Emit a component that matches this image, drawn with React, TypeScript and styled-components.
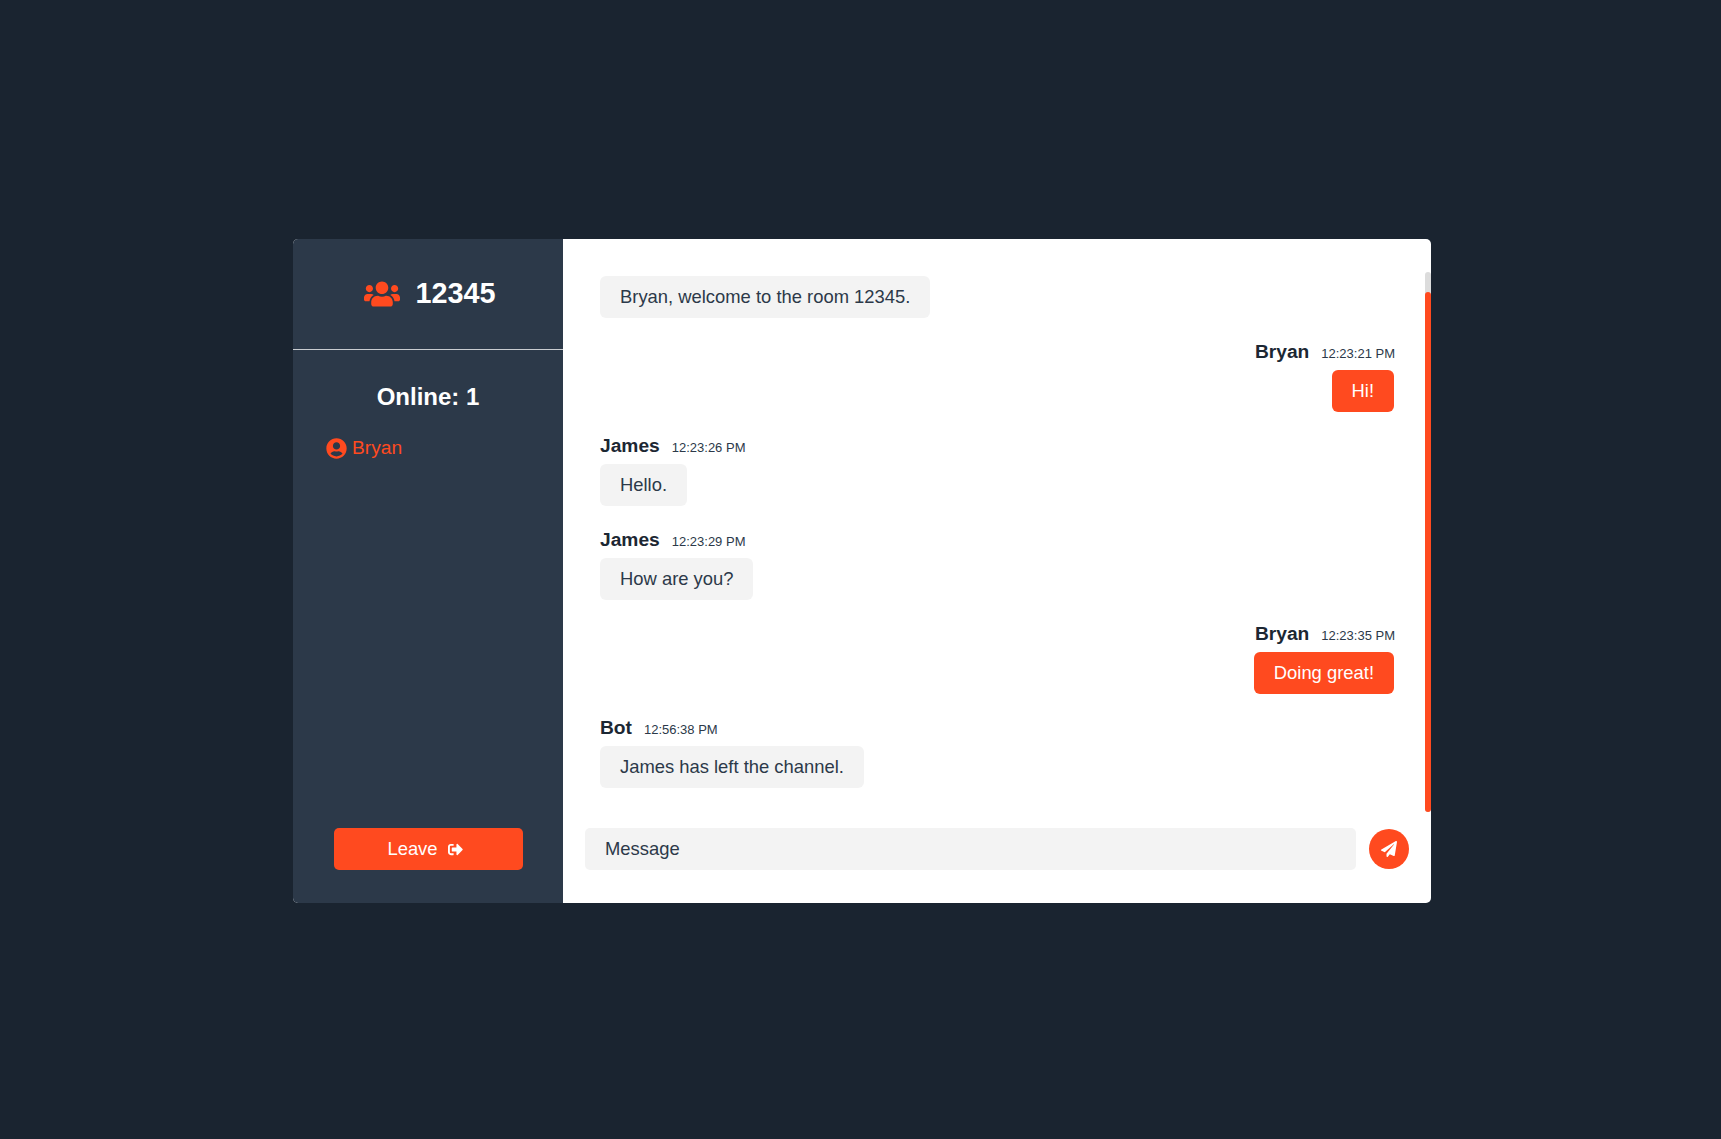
import { useLayoutEffect, useRef } from "react";
import styled, { createGlobalStyle } from "styled-components";
import { FaPaperPlane, FaSignOutAlt, FaUserCircle, FaUsers } from "react-icons/fa";

const orange = "#ff4a1f";

const GlobalStyle = createGlobalStyle`
  * {
    box-sizing: border-box;
  }
  html, body {
    margin: 0;
    background: #1a2430;
    font-family: "Liberation Sans", Arial, sans-serif;
  }
`;

const Page = styled.div`
  min-height: 100vh;
  padding: 239px 0 0 293px;
`;
const Card = styled.div`
  display: grid;
  grid-template-columns: 270px 1fr;
  width: 1138px;
  height: 664px;
  border-radius: 5px;
  overflow: hidden;
  background: #fff;
`;
const Sidebar = styled.aside`
  display: flex;
  flex-direction: column;
  background: #2c3949;
  color: #fff;
`;
const RoomHeader = styled.h2`
  display: flex;
  align-items: center;
  justify-content: center;
  gap: 15px;
  height: 111px;
  margin: 0;
  padding: 0 0 1px 4px;
  font-size: 28.8px;
  border-bottom: 1px solid #c9ccd0;
  svg {
    color: ${orange};
    font-size: 36px;
  }
`;
const OnlineTitle = styled.h3`
  margin: 33px 0 0;
  font-size: 24px;
  line-height: 28px;
  text-align: center;
`;
const UserList = styled.ul`
  flex: 1;
  list-style: none;
  margin: 25px 0 0;
  padding: 0 0 0 33px;
`;
const User = styled.li`
  display: flex;
  align-items: center;
  gap: 5px;
  color: ${orange};
  font-size: 19.2px;
  line-height: 24px;
  svg {
    font-size: 21px;
  }
`;
const LeaveButton = styled.button`
  display: flex;
  align-items: center;
  justify-content: center;
  gap: 10px;
  width: 189px;
  height: 42px;
  margin: 0 auto 33px;
  padding: 0 6px 0 0;
  border: 0;
  border-radius: 5px;
  background: ${orange};
  color: #fff;
  font: inherit;
  font-size: 18.4px;
  svg {
    font-size: 15px;
  }
`;
const ChatPane = styled.main`
  position: relative;
  display: flex;
  flex-direction: column;
  min-width: 0;
  padding-top: 33px;
`;
const Messages = styled.div`
  display: flex;
  flex-direction: column;
  gap: 22px;
  height: 540px;
  padding: 25px 37px 24px;
  overflow: hidden;
`;
const ScrollTrack = styled.div`
  position: absolute;
  top: 33px;
  right: 0;
  width: 6px;
  height: 540px;
  border-radius: 3px;
  background: #dcdcdc;
`;
const ScrollThumb = styled.div`
  position: absolute;
  bottom: 0;
  width: 100%;
  border-radius: 3px;
  background: ${orange};
`;
const MessageRow = styled.div<{ $mine?: boolean }>`
  display: flex;
  flex: none;
  flex-direction: column;
  align-items: ${(p) => (p.$mine ? "flex-end" : "flex-start")};
`;
const Meta = styled.div<{ $mine?: boolean }>`
  display: flex;
  align-items: baseline;
  gap: 12px;
  height: 30px;
  margin-right: ${(p) => (p.$mine ? "-1px" : "0")};
  line-height: 24px;
`;
const Name = styled.span`
  color: #1c2733;
  font-size: 19.2px;
  font-weight: 700;
`;
const Time = styled.span`
  color: #2c3949;
  font-size: 13px;
`;
const Bubble = styled.div<{ $mine?: boolean }>`
  height: 42px;
  padding: 0 20px;
  border-radius: 6px;
  background: ${(p) => (p.$mine ? orange : "#f3f3f3")};
  color: ${(p) => (p.$mine ? "#fff" : "#2c3949")};
  font-size: 18.4px;
  line-height: 41px;
`;
const Composer = styled.form`
  display: flex;
  align-items: center;
  gap: 13px;
  padding: 16px 22px 0;
`;
const MessageInput = styled.input`
  flex: 1;
  height: 42px;
  padding: 0 20px;
  border: 0;
  border-radius: 5px;
  outline: none;
  background: #f3f3f3;
  color: #2c3949;
  font: inherit;
  font-size: 18.4px;
  &::placeholder {
    color: #2c3949;
    opacity: 1;
  }
`;
const SendButton = styled.button`
  display: flex;
  align-items: center;
  justify-content: center;
  flex: none;
  width: 40px;
  height: 40px;
  padding: 0;
  border: 0;
  border-radius: 50%;
  background: ${orange};
  color: #fff;
  font-size: 16px;
`;

type Message = { name?: string; time?: string; text: string; mine?: boolean };

const messages: Message[] = [
  { text: "Bryan, welcome to the room 12345." },
  { name: "Bryan", time: "12:23:21 PM", text: "Hi!", mine: true },
  { name: "James", time: "12:23:26 PM", text: "Hello." },
  { name: "James", time: "12:23:29 PM", text: "How are you?" },
  { name: "Bryan", time: "12:23:35 PM", text: "Doing great!", mine: true },
  { name: "Bot", time: "12:56:38 PM", text: "James has left the channel." },
];

const App = () => {
  const listRef = useRef<HTMLDivElement>(null);
  const thumbRef = useRef<HTMLDivElement>(null);

  // the browser hides native scrollbars here, so the thumb is sized by hand
  useLayoutEffect(() => {
    const list = listRef.current;
    if (!list || !thumbRef.current) return;
    list.scrollTop = list.scrollHeight;
    thumbRef.current.style.height = `${(list.clientHeight * list.clientHeight) / list.scrollHeight}px`;
  }, []);

  return (
    <Page>
      <GlobalStyle />
      <Card>
        <Sidebar>
          <RoomHeader>
            <FaUsers />
            12345
          </RoomHeader>
          <OnlineTitle>Online: 1</OnlineTitle>
          <UserList>
            <User>
              <FaUserCircle />
              Bryan
            </User>
          </UserList>
          <LeaveButton type="button">
            Leave
            <FaSignOutAlt />
          </LeaveButton>
        </Sidebar>
        <ChatPane>
          <Messages ref={listRef}>
            {messages.map((m) => (
              <MessageRow key={m.text} $mine={m.mine}>
                {m.name && (
                  <Meta $mine={m.mine}>
                    <Name>{m.name}</Name>
                    <Time>{m.time}</Time>
                  </Meta>
                )}
                <Bubble $mine={m.mine}>{m.text}</Bubble>
              </MessageRow>
            ))}
          </Messages>
          <ScrollTrack>
            <ScrollThumb ref={thumbRef} />
          </ScrollTrack>
          <Composer onSubmit={(e) => e.preventDefault()}>
            <MessageInput placeholder="Message" />
            <SendButton type="submit" aria-label="Send">
              <FaPaperPlane />
            </SendButton>
          </Composer>
        </ChatPane>
      </Card>
    </Page>
  );
};

export default App;
